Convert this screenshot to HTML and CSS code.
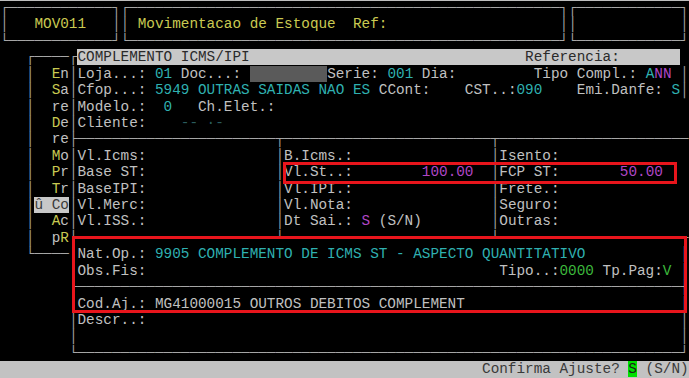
FILE: index.html
```html
<!DOCTYPE html>
<html lang="pt">
<head>
    <meta charset="UTF-8">
    <title>MOV011 - Movimentacao de Estoque</title>
    <link rel="stylesheet" href="styles.css">
</head>
<body>
    <div class="screen">
        <!-- cabecalho -->
        <div class="row"><span class="ln">┌────────────┐┌──────────────────────────────────────────────────┐┌────────────┐</span></div>
        <div class="row"><span class="ln">│</span>   <span class="y">MOV011</span>   <span class="ln">││</span> <span class="y">Movimentacao de Estoque  Ref:</span>                    <span class="ln">││</span>            <span class="ln">│</span></div>
        <div class="row"><span class="ln">└────────────┘└──────────────────────────────────────────────────┘└────────────┘</span></div>
        <!-- janela complemento -->
        <div class="row">   <span class="ln">┌────┌</span><span class="bar">COMPLEMENTO ICMS/IPI                                Referencia:       </span></div>
        <div class="row">   <span class="ln">│</span>  <span class="y">E</span>n<span class="ln">│</span>Loja...: <span class="c">01</span> Doc...: <span class="blk">         </span>Serie: <span class="c">001</span> Dia:         Tipo Compl.: <span class="c">A</span><span class="m">NN</span> <span class="ln">│</span></div>
        <div class="row">   <span class="ln">│</span>  <span class="y">S</span>a<span class="ln">│</span>Cfop...: <span class="c">5949 OUTRAS SAIDAS NAO ES</span> CCont:    CST..:<span class="c">090</span>    Emi.Danfe: <span class="c">S</span><span class="ln">│</span></div>
        <div class="row">   <span class="ln">│</span>  re<span class="ln">│</span>Modelo.:  <span class="c">0</span>   Ch.Elet.:</div>
        <div class="row">   <span class="ln">│</span>  <span class="y">D</span>e<span class="ln">│</span>Cliente:    <span class="dim">-- ·-</span></div>
        <div class="row">   <span class="ln">│</span>  re<span class="ln">├───────────────────────┬────────────────────────┬──────────────────────</span></div>
        <!-- valores -->
        <div class="row">   <span class="ln">│</span>  <span class="y">M</span>o<span class="ln">│</span>Vl.Icms:               <span class="ln">│</span>B.Icms.:                <span class="ln">│</span>Isento:</div>
        <div class="row">   <span class="ln">│</span>  <span class="y">P</span>r<span class="ln">│</span>Base ST:               <span class="ln">│</span>Vl.St..:        <span class="m">100.00</span>  <span class="ln">│</span>FCP ST:       <span class="m">50.00</span></div>
        <div class="row">   <span class="ln">│</span>  <span class="y">T</span>r<span class="ln">│</span>BaseIPI:               <span class="ln">│</span>Vl.IPI.:                <span class="ln">│</span>Frete.:</div>
        <div class="row">   <span class="ln">│</span><span class="hl">û Co</span><span class="ln">│</span>Vl.Merc:               <span class="ln">│</span>Vl.Nota:                <span class="ln">│</span>Seguro:</div>
        <div class="row">   <span class="ln">│</span>  <span class="y">A</span>c<span class="ln">│</span>Vl.ISS.:               <span class="ln">│</span>Dt Sai.: <span class="m">S</span> (S/N)        <span class="ln">│</span>Outras:</div>
        <div class="row">   <span class="ln">│</span>  p<span class="y">R</span><span class="ln">├───────────────────────┴────────────────────────┴──────────────────────</span></div>
        <!-- natureza / ajuste -->
        <div class="row">   <span class="ln">└────│</span>Nat.Op.: <span class="c">9905 COMPLEMENTO DE ICMS ST - ASPECTO QUANTITATIVO</span>           <span class="ln">│</span></div>
        <div class="row">        <span class="ln">│</span>Obs.Fis:                                         Tipo..:<span class="g">0000</span> Tp.Pag:<span class="g">V</span> <span class="ln">│</span></div>
        <div class="row">        <span class="ln">├──────────────────────────────────────────────────────────────────────┤</span></div>
        <div class="row">        <span class="ln">│</span>Cod.Aj.: MG41000015 OUTROS DEBITOS COMPLEMENT                         <span class="ln">│</span></div>
        <div class="row">        <span class="ln">│</span>Descr..:                                                              <span class="ln">│</span></div>
        <div class="row">        <span class="ln">│</span>                                                                      <span class="ln">│</span></div>
        <div class="row">        <span class="ln">└──────────────────────────────────────────────────────────────────────┘</span></div>
        <!-- rodape -->
        <div class="row status">                                                        Confirma Ajuste? <span class="ok">S</span> (S/N)</div>

        <!-- marcacoes em vermelho -->
        <div class="mark mark-st"></div>
        <div class="mark mark-nat"></div>
    </div>
</body>
</html>
```
FILE: styles.css
```css
html,body{
    margin: 0;
    padding: 0;
    background-color: #000;
}
body{
    width: 689px;
    height: 378px;
    overflow: hidden;
}
.screen{
    position: relative;
    width: 689px;
    height: 378px;
    background-color: #000;
    box-shadow: inset 0 1px 0 #bdbdbd;
    font-family: "Courier New", "Nimbus Mono PS", "Nimbus Mono L", "FreeMono", "Liberation Mono", monospace;
    font-size: 14.35px;
    line-height: 16.435px;
    color: #c0c0c0;
}
.row{
    height: 16.435px;
    white-space: pre;
}
/* cores do terminal */
.ln{
    color: #a6a6a6;
}
.y{
    color: #caca52;
}
.c{
    color: #2fb0b0;
}
.m{
    color: #b046c6;
}
.g{
    color: #3cb83c;
}
.dim{
    color: #2a5c5e;
}
.bar{
    background-color: #c8c8c8;
    color: #2a2a2a;
}
.blk{
    background-color: #5a5a5a;
}
.hl{
    background-color: #c8c8c8;
    color: #3a3a3a;
}
.status{
    background-color: #c2c2c2;
    color: #3a3a3a;
}
.ok{
    background-color: #00e000;
    color: #1a1a1a;
}
/* retangulos vermelhos */
.mark{
    position: absolute;
    border: 3px solid #e8151c;
}
.mark-st{
    left: 283px;
    top: 162px;
    width: 388px;
    height: 16px;
}
.mark-nat{
    left: 72px;
    top: 236px;
    width: 609px;
    height: 71px;
}
```
